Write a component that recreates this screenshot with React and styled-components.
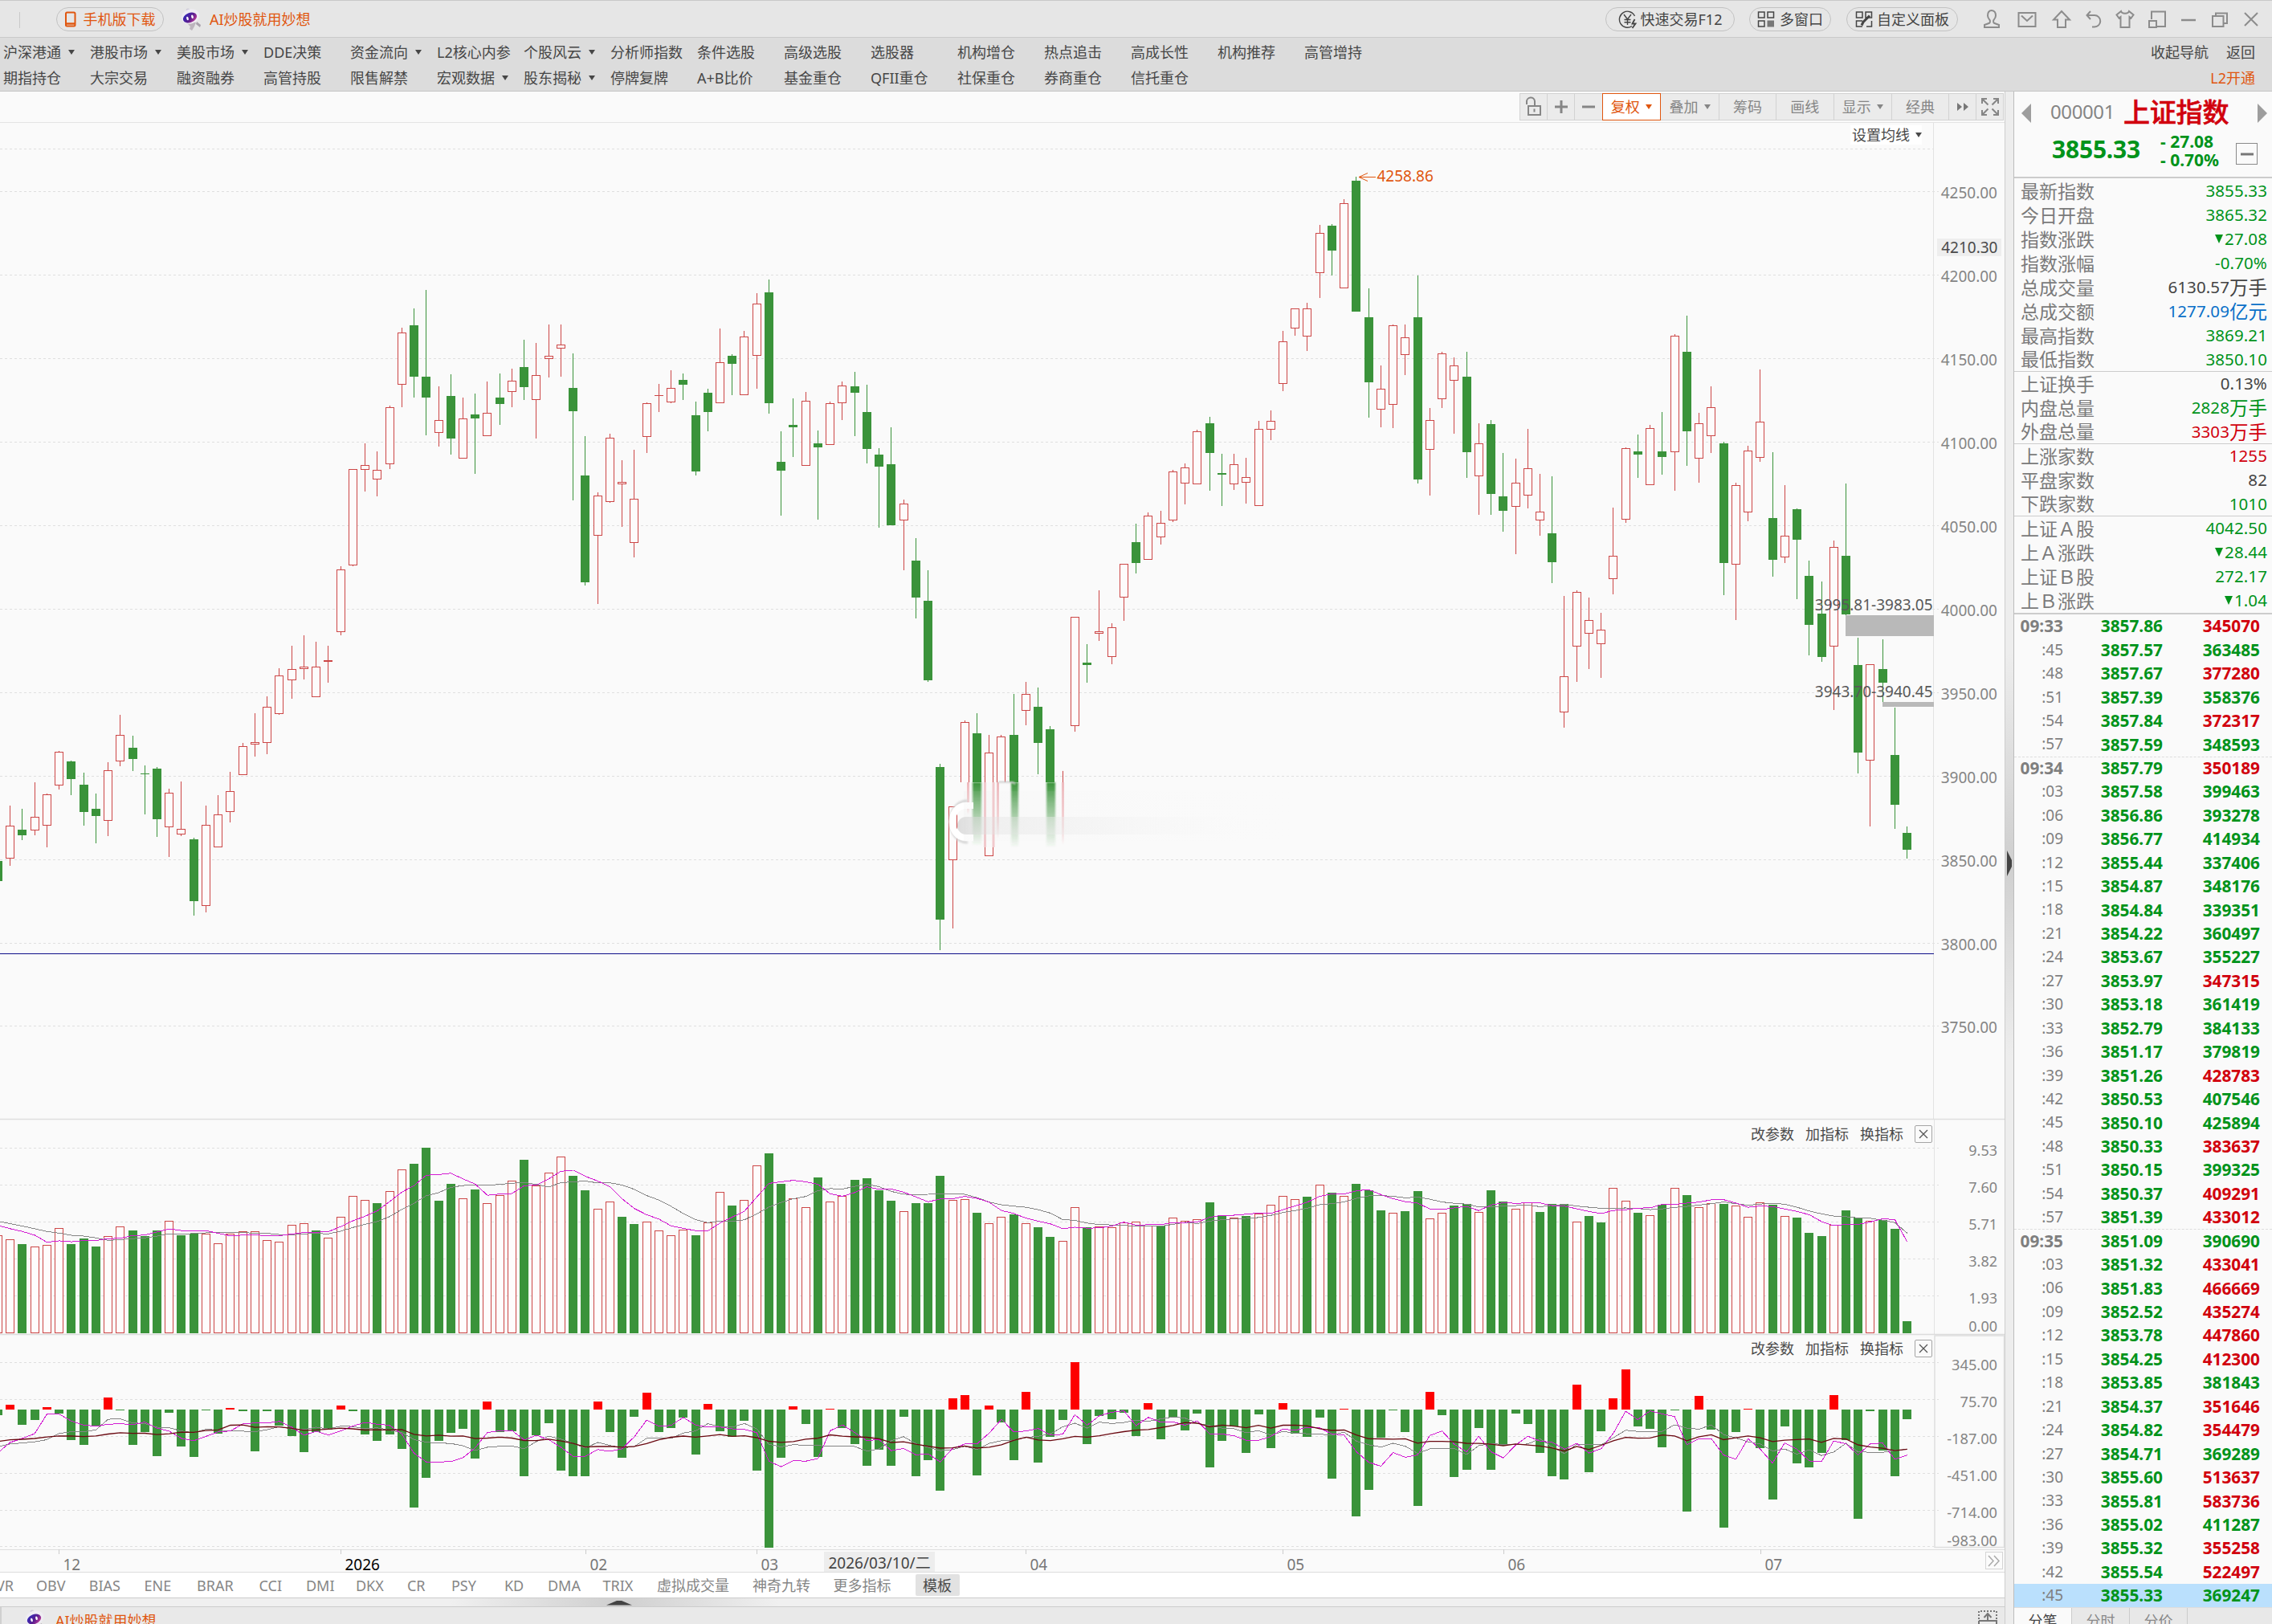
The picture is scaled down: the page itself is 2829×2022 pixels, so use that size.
import React from "react";
import styled, { createGlobalStyle, css } from "styled-components";

const GREEN = "#00931a";
const RED = "#d1000d";
const ORANGE = "#e0560f";
const FONT = `"Noto Sans", "Noto Sans CJK SC", sans-serif`;

const GlobalStyle = createGlobalStyle`
  * { box-sizing: border-box; }
  body { margin: 0; background: #fafafa; font-family: ${FONT}; font-size: 18px; line-height: 1; color: #333; overflow: hidden; }
  svg { display: block; flex: none; overflow: visible; }
  svg text { font-family: ${FONT}; }
`;

/* ---------- market data ---------- */

// Each block holds rows of "kind high top bottom low", measured down from `top` in 1/scale units.
const candleBlocks = [
  {
    top: 340,
    scale: 1.9122,
    rows: `g 1400 1400 1447 1447,r 1268 1316 1393 1412,g 1275 1325 1339 1350,r 1213 1295 1326 1338,r 1239 1241 1313 1368,
r 1138 1140 1219 1230,g 1161 1163 1205 1243,g 1189 1218 1283 1315,g 1240 1275 1293 1357,r 1165 1184 1303 1340,
r 1052 1100 1160 1175,g 1102 1130 1157 1186,g 1173 1191 1192 1288,g 1176 1180 1301 1343,r 1228 1237 1318 1391,
r 1210 1323 1334 1340,g 1344 1348 1495 1529,r 1268 1314 1504 1522,r 1243 1289 1366 1368,r 1187 1233 1282 1307,
r 1118 1127 1194 1194,r 1048 1117 1121 1152,r 1008 1033 1116 1146,r 941 958 1047 1051,r 887 943 967 1014,
r 862 937 941 968,r 878 937 1007 1007,r 887 922 923 975,r 698 706 852 863,r 467 467 695 697,
r 405 457 466 521,r 425 468 490 531,r 315 319 454 466,r 130 142 263 320,g 84 124 247 296,
g 41 247 296 386,r 270 350 378 413,g 241 293 394 433,r 296 346 439 439,g 287 337 346 479,r 258 333 387 387`,
  },
  {
    top: 320,
    scale: 1.7818,
    rows: `g 258 312 326 372,r 248 274 298 334,g 184 244 289 317,r 191 262 316 403,r 150 219 224 268,
r 150 195 202 266,g 214 290 342 539,g 397 485 722 728,r 522 529 617 770,r 392 401 541 546,
r 451 499 503 598,r 428 536 632 667,r 323 324 397 434,r 282 306 307 344,r 251 290 320 325,
g 258 273 283 318,g 321 351 476 485,g 292 301 344 387,r 159 233 322 324,g 216 219 237 307,
r 164 176 304 304,r 80 103 218 292,g 50 78 324 348,g 387 454 474 573,g 314 372 377 444,
r 299 319 462 462,g 385 413 422 583,r 321 324 416 416,r 276 285 322 361,g 255 287 301 397,
g 284 344 426 458,g 424 438 465 601,g 378 460 595 595,r 538 547 583 695,g 624 674 755 802,
g 695 763 939 943,g 1125 1131 1470 1538,r 1219 1219 1337 1490`,
  },
  {
    top: 200,
    scale: 1.7818,
    rows: `r 1242 1245 1500 1500,g 1226 1270 1379 1379,r 1274 1313 1542 1542,r 1274 1278 1500 1500,g 1183 1274 1379 1379,
r 1157 1183 1218 1252,g 1169 1212 1292 1362,g 1254 1262 1379 1379,r 1354 1379 1379 1379,r 1012 1012 1252 1267,
g 1072 1114 1119 1158,r 953 1044 1048 1066,r 1026 1035 1100 1118,r 895 895 968 1021,g 805 846 893 916,
r 780 788 883 886,r 777 804 833 851,r 686 690 797 801,r 672 680 714 763,r 597 601 717 717,
g 568 583 649 732,g 651 693 697 766,r 651 674 717 731,r 659 702 712 761,r 577 595 765 765,
r 554 577 596 620,r 378 401 493 511,r 327 327 370 388,r 315 327 388 422,r 143 160 248 305,
g 141 144 200 254,r 86 94 282 282,g 36 45 335 335,g 283 347 492 570,r 454 506 550 591,
r 363 365 539 593,r 363 392 429 475,g 255 347 707 717,r 548 576 639 743,r 424 428 527 548,r 437 454 486 605`,
  },
  {
    top: 340,
    scale: 2.1189,
    rows: `g 208 273 473 541,r 396 450 533 637,g 388 398 582 637,g 475 589 628 682,r 489 553 615 741,
r 412 515 584 621,r 530 629 650 692,g 536 687 763 818,r 852 1064 1156 1200,r 837 841 984 1078,
r 856 915 950 1045,r 896 941 976 1067,r 619 746 806 847,r 459 461 649 658,g 426 470 479 541,
r 401 409 558 558,g 367 470 485 531,r 161 166 471 575,g 112 208 417 508,r 369 396 488 553,
r 299 354 429 475,g 446 449 765 850,r 553 560 768 916,r 456 468 630 655,r 254 391 486 499,
g 473 646 756 801,r 559 693 747 765,g 621 623 703 860,g 759 799 928 1008,g 814 898 1013 1025,
r 706 723 984 1153,g 555 746 901 903,g 961 1034 1265 1321,r 1031 1031 1285 1459,g 966 1045 1081 1133,
g 1146 1271 1403 1467,g 1460 1477 1521 1545`,
  },
];

const candles = candleBlocks.flatMap(({ top, scale, rows }) =>
  rows.split(",").map((row) => {
    const [kind, ...v] = row.trim().split(" ");
    const [high, open, close, low] = v.map((n) => top + Number(n) / scale);
    return { kind, high, open, close, low };
  })
);

const volumeBlocks = [
  {
    top: 1400,
    scale: 2.9037,
    rows: `r400 r416 g433 r442 r437 r376 g433 g412 g441 r403 r370 g383 g403 g383 r349 g400 g394 r394 r431 r394 r387 r387 r419 r425
r364 r358 g383 r408 r335 r259 r274 g285 r242 r164 g142 g84 g276 g215 r268 g235 r286 r255 r204 g128 r222 r175 r117 g186 g238
r306 r280 g334 g360 r352 r384 r402 r381 g401 r355 r245 g293 r274 r149 g105 g215 r268 r300 g192 r280 r259 g200 g195 g238 g276
r315 g285 g285 g186 r274 r271 g319 r358 r335 g325 r358 g372 g407 r422 r300 g373 r370 r371 r353 r352 r367 g367 r338 r349 r344
g282 g328 r338 g331 r322 r291 r259 r271 g261 r219 g247 r259 g215`,
  },
  {
    top: 1390,
    scale: 2.7509,
    rows: `g252 g322 r331 g325 g256 r350 r331 g305 g300 r328 g253 g292 r315 r295 g327 g300 g301 r359 g341 g363 r246 r290 g330 r337
g303 r246 g270 r312 r297 g300 r304 r343 r293 g303 r342 g347 g399 g410 r372 g322 g347 r357 g356 g385 g701`,
  },
];

const flowBlocks = [
  {
    top: 1400,
    scale: 2.9037,
    rows: `g1050 r1013 g1086 g1069 r1022 g1045 g1140 g1159 g1089 r987 g1034 g1159 g1112 g1199 g1042 g1163 g1202 g1033 g1118 r1025
g1037 g1182 g1036 g1088 g1127 g1185 g1112 g1102 r1016 g1036 g1121 g1144 g1121 g1173 g1385 g1278 g1144 g1115 g1101 g1208 r1002
g1112 g1109 g1272 g1124 g1080 g1251 g1272 g1272 r1002 g1112 g1205 g1057 r970 g1112 g1098 g1060 g1193 r1010 g1109 g1130 g1071
g1251 g1530 g1205 r1019 g1083 g1202 r1029 g1098 g1156 g1234 g1176 g1234 g1057 g1272 g1214 g1324 r990 r979 g1269 r1016 g1077
g1214 r967 g1222 g1130 g1069 r859 g1156 g1054 g1066 g1042 g1127 r1008 g1138 g1060 g1106 g1045 g1240 g1144 g1092 g1188 g1048
g1170 r1008 g1118 g1130 g1060 g1280 r1029 g1417`,
  },
  {
    top: 1390,
    scale: 2.7509,
    rows: `g1279 g1100 g1007 g1080 g1334 r944 g1022 g1235 g1210 g1067 g1210 g1127 g1018 g1053 g1152 g1232 g1243 r919 g1219 g1078
r966 r867 g1062 g1070 g1133 g1007 g1353 r957 g1073 g1408 g1081 r1001 g1136 g1312 g1061 g1188 g1202 g1152 r955 g1109 g1378
g1009 g1145 g1232 g1037`,
  },
];

const readBars = (blocks) =>
  blocks.flatMap(({ top, scale, rows }) =>
    rows.trim().split(/\s+/).map((t) => ({ kind: t[0], y: top + Number(t.slice(1)) / scale }))
  );

const volumes = readBars(volumeBlocks);
const flows = readBars(flowBlocks);

// Values just before the visible range, needed to start the averages.
const fromFirst = (list) => list.map((n) => 1400 + n / 2.9037);
const volumeLead = fromFirst([330, 345, 345, 338, 317, 356, 383, 377, 309]);
const flowLead = fromFirst([
  1127, 1127, 1127, 1127, 1127, 1127, 1127, 1127, 1127, 1127, 1113, 1120, 1110, 1100, 1272, 1198, 1161, 1154, 1372,
]);

const STEP = 15.239;
const xAt = (i) => i * STEP - 2.6;

const averageLine = (bars, lead, n) => {
  const all = [...lead, ...bars.map((b) => b.y)];
  return bars
    .map((_, i) => {
      const end = i + lead.length + 1;
      const part = all.slice(Math.max(0, end - n), end);
      const mean = part.reduce((a, b) => a + b, 0) / part.length;
      return `${xAt(i).toFixed(1)},${mean.toFixed(1)}`;
    })
    .join(" ");
};

const priceTicks = Array.from({ length: 11 }, (_, i) => ({ label: (4250 - i * 50).toFixed(2), y: 238.4 + i * 103.9 }));
const volumeTicks = [["9.53", 1429.5], ["7.60", 1475.5], ["5.71", 1521.5], ["3.82", 1567.5], ["1.93", 1613.5]];
const flowTicks = [["345.00", 1696.5], ["75.70", 1742.5], ["-187.00", 1788.5], ["-451.00", 1834.5], ["-714.00", 1880.5]];
const months = [
  [73.5, "12"], [424.5, "2026"], [729.5, "02"], [942.5, "03"], [1277.5, "04"], [1597.5, "05"], [1872.5, "06"], [2192.5, "07"],
];

const navColumns = [
  ["沪深港通▾", "期指持仓"], ["港股市场▾", "大宗交易"], ["美股市场▾", "融资融券"], ["DDE决策", "高管持股"],
  ["资金流向▾", "限售解禁"], ["L2核心内参", "宏观数据▾"], ["个股风云▾", "股东揭秘▾"], ["分析师指数", "停牌复牌"],
  ["条件选股", "A+B比价"], ["高级选股", "基金重仓"], ["选股器", "QFII重仓"], ["机构增仓", "社保重仓"],
  ["热点追击", "券商重仓"], ["高成长性", "信托重仓"], ["机构推荐", ""], ["高管增持", ""],
];

const quoteGroups = [
  [
    ["最新指数", "3855.33", GREEN], ["今日开盘", "3865.32", GREEN], ["指数涨跌", "▼27.08", GREEN], ["指数涨幅", "-0.70%", GREEN],
    ["总成交量", "6130.57万手", "#444"], ["总成交额", "1277.09亿元", "#0a70c8"], ["最高指数", "3869.21", GREEN], ["最低指数", "3850.10", GREEN],
  ],
  [["上证换手", "0.13%", "#444"], ["内盘总量", "2828万手", GREEN], ["外盘总量", "3303万手", RED]],
  [["上涨家数", "1255", RED], ["平盘家数", "82", "#444"], ["下跌家数", "1010", GREEN]],
  [["上证Ａ股", "4042.50", GREEN], ["上Ａ涨跌", "▼28.44", GREEN], ["上证Ｂ股", "272.17", GREEN], ["上Ｂ涨跌", "▼1.04", GREEN]],
];

const ticks = `09:33 57.86 345070 r|:45 57.57 363485 g|:48 57.67 377280 r|:51 57.39 358376 g|:54 57.84 372317 r|:57 57.59 348593 g
09:34 57.79 350189 r|:03 57.58 399463 g|:06 56.86 393278 g|:09 56.77 414934 g|:12 55.44 337406 g|:15 54.87 348176 g|:18 54.84 339351 g|:21 54.22 360497 g|:24 53.67 355227 g|:27 53.97 347315 r|:30 53.18 361419 g|:33 52.79 384133 g|:36 51.17 379819 g|:39 51.26 428783 r|:42 50.53 407546 g|:45 50.10 425894 g|:48 50.33 383637 r|:51 50.15 399325 g|:54 50.37 409291 r|:57 51.39 433012 r
09:35 51.09 390690 g|:03 51.32 433041 r|:06 51.83 466669 r|:09 52.52 435274 r|:12 53.78 447860 r|:15 54.25 412300 r|:18 53.85 381843 g|:21 54.37 351646 r|:24 54.82 354479 r|:27 54.71 369289 g|:30 55.60 513637 r|:33 55.81 583736 r|:36 55.02 411287 g|:39 55.32 355258 r|:42 55.54 522497 r|:45 55.33 369247 g`
  .split(/[|\n]/)
  .map((t) => t.split(" "));

const indicatorTabs = [
  ["VR", 50], ["OBV", 65.7], ["BIAS", 68.8], ["ENE", 65.5], ["BRAR", 77.6], ["CCI", 58.4], ["DMI", 62], ["DKX", 64], ["CR", 55],
  ["PSY", 66], ["KD", 54], ["DMA", 68.5], ["TRIX", 67.5], ["虚拟成交量", 119], ["神奇九转", 100.6], ["更多指标", 102],
];

/* ---------- layout ---------- */

const Page = styled.div`width: 2829px; height: 2022px; display: flex; flex-direction: column; background: #fafafa; overflow: hidden;`;

const TitleBar = styled.header`
  height: 47px; flex: none; display: flex; align-items: center; background: #e6e6e6;
  border-top: 1px solid #c9c9c9; border-bottom: 1px solid #cacaca;
`;
const TitleRule = styled.i`width: 1px; height: 20px; margin: 2px 45px 0 24px; background: #c8c8c8;`;
const Pill = styled.div`
  width: ${(p) => p.$w}px; height: 30px; display: flex; align-items: center; justify-content: center; gap: ${(p) => p.$gap || 6}px;
  border: 1.5px solid #c2c2c2; border-radius: 15px; color: ${(p) => p.$color || "#444"}; margin-right: ${(p) => p.$after}px; white-space: nowrap;
`;
const Assistant = styled.div`display: flex; align-items: center; gap: 9px; color: ${ORANGE}; white-space: nowrap;`;
const TitleRight = styled.div`margin-left: auto; display: flex; align-items: center; padding-right: 7px;`;
const IconCell = styled.div`width: ${(p) => p.$w}px; display: flex; justify-content: center; color: #8c8c8c;`;

const NavBar = styled.nav`
  height: 67px; flex: none; display: flex; justify-content: space-between; background: #dcdcdc; padding: 1px 0 0 4px; border-bottom: 1px solid #c6c6c6;
`;
const NavGrid = styled.div`display: grid; grid-template-columns: repeat(16, 108px); grid-auto-flow: column; grid-template-rows: 33px 32px;`;
const NavItem = styled.a`display: flex; align-items: center; color: #464646; white-space: nowrap;`;
const Caret = styled.i`
  width: 0; height: 0; margin-left: ${(p) => p.$gap ?? 9}px; border: 4px solid transparent; border-top: 6px solid currentColor; border-bottom: 0;
`;
const NavAside = styled.div`display: grid; grid-template-rows: 33px 32px; padding-right: 21px; justify-items: end;`;
const NavPair = styled.div`display: flex; gap: 22px; align-items: center; color: ${(p) => p.$color || "#464646"};`;

const Body = styled.main`flex: 1; display: flex; min-height: 0;`;
const ChartColumn = styled.section`width: 2496px; display: flex; flex-direction: column; position: relative;`;

const Toolbar = styled.div`height: 39px; flex: none; display: flex; justify-content: flex-end; align-items: center; padding-right: 1px; border-bottom: 1px solid #e4e4e4;`;
const ToolButton = styled.button`
  width: ${(p) => p.$w + 1}px; height: 34px; margin: 0 0 0 -1px; padding: 0; display: flex; align-items: center; justify-content: center;
  font: 18px ${FONT}; line-height: 1; background: #ebebeb; color: #868686; border: 1px solid #d2d2d2;
  ${(p) => p.$active && css`background: #fff; color: ${ORANGE}; border-color: ${ORANGE}; position: relative;`}
`;

const Panel = styled.div`height: ${(p) => p.$h}px; flex: none; position: relative;`;
const PanelActions = styled.div`
  position: absolute; top: ${(p) => p.$top}px; right: 90px; height: 22px; display: flex; align-items: center; gap: 14px; color: #4a4a4a;
`;
const CloseBox = styled.button`
  width: 22px; height: 22px; padding: 0; display: flex; align-items: center; justify-content: center; background: none; border: 1px solid #a5a5a5; border-radius: 2px; color: #555;
`;
const AverageSetting = styled.div`
  position: absolute; top: 3px; right: 103px; height: 24px; display: flex; align-items: center; color: #4a4a4a; background: #fff; padding-left: 2px;
`;

const IndicatorBar = styled.div`height: 32px; flex: none; display: flex; align-items: center; background: #fff; border-top: 1px solid #ddd; overflow: hidden; color: #868686;`;
const IndicatorTab = styled.span`width: ${(p) => p.$w}px; flex: none; white-space: nowrap; line-height: 26px; &:first-child { margin-left: -5px; }`;
const TemplateTab = styled.span`width: 55px; height: 27px; display: flex; align-items: center; justify-content: center; background: #e2e2e2; color: #4a4a4a; border-radius: 2px;`;
const Drawer = styled.div`
  height: 12px; flex: none; background: linear-gradient(90deg, #f0f0f0 560px, #cfcfcf 770px, #f0f0f0 970px); border-top: 1px solid #ccc; border-bottom: 1px solid #ccc; padding-left: 755px;
`;
const StatusBar = styled.footer`height: 21px; flex: none; display: flex; align-items: flex-start; justify-content: space-between; background: #e9e9e9; border-left: 2px solid #d0d0d0; padding: 3px 8px 0 28px; overflow: hidden;`;
const StatusAssistant = styled(Assistant)`gap: 11px; height: 27px;`;

const Splitter = styled.div`
  width: 11px; display: flex; flex-direction: column; justify-content: center; border-left: 1px solid #cdcdcd; padding-top: 14px;
  background: linear-gradient(180deg, #ededed 700px, #cfcfcf 960px, #ededed 1200px);
`;

const QuotePanel = styled.aside`width: 322px; border-left: 1px solid #bdbdbd; display: flex; flex-direction: column; overflow: hidden;`;
const QuoteHead = styled.div`height: 108px; flex: none; border-bottom: 2px solid #ccc;`;
const NameRow = styled.div`display: flex; align-items: center; height: 53px; padding: 0 6px 0 9px;`;
const Code = styled.span`width: 80px; margin: -3px 11px 0 24px; font-size: 24px; letter-spacing: -0.4px; color: #858585;`;
const Name = styled.span`margin-top: -3px; font-size: 33px; font-weight: 500; color: ${RED}; letter-spacing: -0.2px; -webkit-text-stroke: 0.6px ${RED};`;
const NextArrow = styled.svg`margin-left: auto;`;
const PriceRow = styled.div`display: flex; padding-left: 47px; font-weight: 700; color: ${GREEN};`;
const LastPrice = styled.span`width: 135px; font-size: 30px; line-height: 38px; letter-spacing: -0.2px;`;
const Change = styled.div`width: 94px; font-size: 21px; line-height: 23px; margin-top: -2px; white-space: pre;`;
const FoldBox = styled.button`width: 27px; height: 27px; margin: 11px 0 0; padding: 0; display: grid; place-items: center; background: none; border: 1.5px solid #8a8a8a; color: #777;`;

const QuoteGroup = styled.dl`margin: 0; flex: none; border-bottom: ${(p) => (p.$last ? 2 : 1)}px solid #ccc; padding-top: ${(p) => (p.$first ? 1 : 0)}px;`;
const QuoteRow = styled.div`
  height: 30px; display: flex; align-items: center; justify-content: space-between; padding: 0 6px 0 8px;
  &:last-child { height: ${(p) => (p.$last ? 30 : 29)}px; }
`;
const Label = styled.dt`font-size: 23px; color: #7b7b7b;`;
const Value = styled.dd`margin: -2px 0 0; font-size: 20.5px; line-height: 28px; color: ${(p) => p.$color}; letter-spacing: 0.1px; display: flex; align-items: center;`;
const Unit = styled.span`font-size: 23.5px; letter-spacing: 0; padding-top: 2px;`;
const DownMark = styled.i`width: 0; height: 0; border: 5.5px solid transparent; border-top: 11px solid currentColor; border-bottom: 0; margin-right: 2px;`;

const TickRow = styled.div`
  height: 29.44px; flex: none; display: grid; grid-template-columns: 61px 124px 121px; align-items: center; text-align: right; font-size: 20.8px; font-weight: 700; color: ${GREEN};
  background: ${(p) => (p.$current ? "#bae0fd" : "none")}; border-top: ${(p) => (p.$minute ? "1px dashed #ddd" : "0")};
`;
const TickTime = styled.span`color: #7f7f7f; font-weight: ${(p) => (p.$bold ? 700 : 400)}; font-size: ${(p) => (p.$bold ? 20.8 : 19)}px;`;
const TickVolume = styled.span`color: ${(p) => (p.$kind === "r" ? RED : GREEN)};`;
const QuoteTabs = styled.div`flex: 1; min-height: 20px; display: flex; background: #e8e8e8; border-top: 1px solid #ddd;`;
const QuoteTab = styled.span`
  width: 72px; height: 32px; flex: none; display: flex; align-items: center; justify-content: center; border-right: 1px solid #ccc; color: ${(p) => (p.$active ? "#444" : "#888")}; background: ${(p) => (p.$active ? "#fafafa" : "none")};
`;

/* ---------- icons ---------- */

const Icon = ({ w = 24, h = 26, sw = 2, children }) => (
  <svg width={w} height={h} viewBox={`0 0 ${w} ${h}`} fill="none" stroke="currentColor" strokeWidth={sw}>{children}</svg>
);

const Robot = () => (
  <svg width="28" height="28" viewBox="0 0 28 28">
    <defs>
      <linearGradient id="visor" x1="0" y1="0" x2="1" y2="1">
        <stop offset="0" stopColor="#2b2fc4" /><stop offset="0.55" stopColor="#5a1d8f" /><stop offset="1" stopColor="#e0489a" />
      </linearGradient>
    </defs>
    <path d="M10 20 L13 17 L20 18 L18 23 L15 28 L12 26 L13 23 Z" fill="#bdb5bd" />
    <path d="M21 17 L26 21 L25 24 L20 20 Z" fill="#a9a2ac" />
    <circle cx="10" cy="3" r="2.4" fill="#d0ccda" />
    <ellipse cx="13" cy="10.5" rx="11.5" ry="9" fill="#efedf3" transform="rotate(-18 13 10.5)" />
    <ellipse cx="12.5" cy="12" rx="9" ry="6" fill="url(#visor)" transform="rotate(-22 12.5 12)" />
    <ellipse cx="9.5" cy="13" rx="1.3" ry="2.3" fill="#fff" transform="rotate(-15 9.5 13)" />
    <ellipse cx="15.5" cy="10.8" rx="1.3" ry="2.3" fill="#fff" transform="rotate(-15 15.5 10.8)" />
  </svg>
);

const PhoneIcon = () => (
  <Icon w={14} h={20}><rect x="1" y="1.5" width="11.5" height="17" rx="1.5" /><path d="M1 15.5H12.5" strokeWidth="2.4" /></Icon>
);
const TradeIcon = () => (
  <Icon w={24} h={24} sw={1.4}>
    <path d="M17 20.5A10 10 0 1 1 20.5 8" /><path d="M7 6l4.5 6L16 6M11.5 12v7M7.5 12.5h8M7.5 15.7h8" />
    <path d="M20.5 12l-3 5.5h4l-4 5.5" strokeWidth="1.8" />
  </Icon>
);
const WindowsIcon = () => (
  <Icon w={22} h={22} sw={1.5}><rect x="1.5" y="2" width="7.5" height="7" /><rect x="13" y="2" width="7.5" height="7" /><rect x="1.5" y="13" width="7.5" height="7" /><rect x="12.5" y="12.5" width="8.5" height="8" fill="#777" stroke="none" /></Icon>
);
const CustomIcon = () => (
  <Icon w={22} h={22} sw={1.5}><path d="M9 2H1.5v7H9zM20.5 9V2H13v7zM9 13H1.5v7H9M14 20h6.5v-7" /><path d="M8 18.500l2-4 8-8" strokeWidth="3" /></Icon>
);

const windowIcons = [
  [44, <Icon key="u"><path d="M12 2c-3.8 0-5 3.4-5 6.5 0 2.600 1.300 4 2.600 5.500.6 1 .3 3-.6 3.800L3 20v3h18v-3l-6-2.200c-.9-.8-1.200-2.800-.6-3.800C15.700 12.500 17 11.100 17 8.500 17 5.400 15.800 2 12 2z" /></Icon>],
  [44, <Icon key="m"><rect x="1.500" y="5" width="21" height="17" /><path d="M5 8.500l7 6.500 7-6.500" /></Icon>],
  [42, <Icon key="h"><path d="M12 3L2 13.500h5V23h10v-9.500h5z" /></Icon>],
  [38, <Icon key="b" w={22}><path d="M7 3L2.500 8 7 13M3 8h9a7 7 0 0 1 0 14.500H9" /></Icon>],
  [40, <Icon key="t"><path d="M7 3L1.500 7.500l3 4L6.500 10v13h11V10l2 1.500 3-4L17 3c-1 3.500-9 3.500-10 0z" /></Icon>],
  [39, <Icon key="p"><path d="M5 13V3.500h17V22H12" /><rect x="2" y="15" width="9" height="8" /></Icon>],
  [39, <Icon key="n" w={18}><path d="M0 14h18" strokeWidth="2.500" /></Icon>],
  [39, <Icon key="r" w={22}><path d="M6 8V5.500h14V18h-4" /><rect x="2" y="9" width="13.500" height="13" /></Icon>],
  [39, <Icon key="x" w={20}><path d="M2 5l16 16M18 5L2 21" /></Icon>],
];

const LockIcon = () => <Icon w={24} h={24}><rect x="5" y="11" width="15" height="11" /><path d="M12.500 14.500v4M3 9V6a5 5 0 0 1 10-1v6" /></Icon>;
const PlusIcon = () => <Icon w={18} h={18} sw={3}><path d="M1 9h16M9 1v16" /></Icon>;
const MinusIcon = () => <Icon w={18} h={18} sw={3}><path d="M1 9h16" /></Icon>;
const ForwardIcon = () => <svg width="16" height="12"><path d="M1 1l6 5-6 5zM9 1l6 5-6 5z" fill="#777" /></svg>;
const ExpandIcon = () => (
  <Icon w={24} h={24}><path d="M2 8V2h6M16 2h6v6M22 16v6h-6M8 22H2v-6M2.500 2.500l7 7M21.500 2.500l-7 7M21.500 21.500l-7-7M2.500 21.500l7-7" /></Icon>
);

/* ---------- charts ---------- */

const GRID = { stroke: "#dfdfdf", strokeWidth: 1, strokeDasharray: "3 3" };
const WIDE = { shapeRendering: "crispEdges" };
const UP = "#cc4646";
const DOWN = "#3a933a";

const AxisText = ({ x = 2487, y, size = 19, color = "#858585", children, anchor = "end" }) => (
  <text x={x} y={y} fontSize={size} fill={color} textAnchor={anchor}>{children}</text>
);

const Candle = ({ i, high, open, close, low, kind }) => {
  const x = Math.round(xAt(i) - 5.5);
  const mid = x + 5.5;
  const [top, bottom] = [Math.round(open), Math.round(close)];
  const color = kind === "r" ? UP : DOWN;
  const flat = bottom - top < 1;
  if (kind === "r" && i === 87) return <path d={`M${mid} ${high}V974`} stroke={color} />;
  return (
    <g {...WIDE}>
      {high < top && <path d={`M${mid} ${Math.round(high)}V${top}`} stroke={color} />}
      {low > bottom && <path d={`M${mid} ${bottom}V${Math.round(low)}`} stroke={color} />}
      {kind === "r" && !flat ? (
        <rect x={x + 0.5} y={top + 0.5} width="10" height={Math.max(1, bottom - top - 0.5)} fill="#fdfbfb" stroke={color} />
      ) : (
        <rect x={x} y={top} width="11" height={Math.max(1, bottom - top)} fill={color} />
      )}
    </g>
  );
};

const Haze = () => (
  <g>
    <defs>
      <linearGradient id="fadeGreen" x1="0" y1="0" x2="0" y2="1"><stop offset="0" stopColor="#3a933a" /><stop offset="0.35" stopColor="#3a933a" stopOpacity="0.6" /><stop offset="1" stopColor="#3a933a" stopOpacity="0.02" /></linearGradient>
      <linearGradient id="fadePink" x1="0" y1="0" x2="0" y2="1"><stop offset="0" stopColor="#eeb9bd" /><stop offset="0.7" stopColor="#f4d3d5" /><stop offset="1" stopColor="#fafafa" /></linearGradient>
      <linearGradient id="streak" x1="0" y1="0" x2="1" y2="0"><stop offset="0" stopColor="#d0d0d0" stopOpacity="0.7" /><stop offset="0.1" stopColor="#e2e2e2" stopOpacity="0.4" /><stop offset="0.4" stopColor="#f0f0f0" stopOpacity="0.5" /><stop offset="1" stopColor="#fafafa" stopOpacity="0" /></linearGradient>
      <filter id="soft" x="-20%" y="-20%" width="140%" height="140%"><feGaussianBlur stdDeviation="1.3" /></filter>
    </defs>
    <path d="M1194 974H1221V1060H1194z M1239 974H1340V1060H1239z" fill="#fafafa" />
    <path d="M1225 974H1237V1055H1225z" fill="#fafafa" />
    <rect x="1204" y="974" width="3" height="40" fill="url(#fadePink)" />
    <g filter="url(#soft)">
      <rect x="1211" y="974" width="11" height="78" fill="url(#fadeGreen)" />
      <rect x="1259" y="974" width="9" height="80" fill="url(#fadeGreen)" />
      <rect x="1303" y="974" width="11" height="80" fill="url(#fadeGreen)" />
    </g>
    <rect x="1225" y="974" width="3" height="81" fill="#f1c9cc" />
    <rect x="1235.500" y="974" width="3" height="81" fill="#f1c9cc" />
    <rect x="1241" y="974" width="3" height="70" fill="url(#fadePink)" />
    <rect x="1322" y="974" width="3" height="78" fill="url(#fadePink)" />
    <path d="M1243 973.500h14q5 0 7 3" stroke="#c9c9c9" strokeWidth="2" fill="none" filter="url(#soft)" />
    <path d="M1205 997C1176 997 1176 1049 1205 1049" stroke="#d4d4d4" strokeWidth="3" fill="none" filter="url(#soft)" />
    <path d="M1212 1003H1203C1180 1003 1180 1043 1203 1043H1212" stroke="#fff" strokeWidth="8" fill="none" />
    <rect x="1192" y="1017" width="410" height="22" rx="11" fill="url(#streak)" />
    <rect x="1200" y="985" width="450" height="62" fill="url(#streak)" opacity="0.12" />
  </g>
);

const PriceChart = () => (
  <svg width="2496" height="1241" viewBox="0 153 2496 1241">
    <path d="M0 185.500H2408" {...GRID} />
    {priceTicks.map((t) => <path key={t.label} d={`M0 ${Math.round(t.y) + 0.5}H2414`} {...GRID} />)}
    <path d="M2407.500 153V1394" stroke="#e2e2e2" />
    <path d="M0 1393.500H2496" stroke="#dedede" strokeWidth="1.500" />
    {candles.map((c, i) => <Candle key={i} i={i} {...c} />)}
    <Haze />
    <path d="M0 1187.500H2408" stroke="#10108a" {...WIDE} />
    <rect x="2298" y="766" width="110" height="26" fill="#b9b9b9" />
    <rect x="2344" y="874" width="64" height="6" fill="#b9b9b9" />
    <AxisText x={2406.5} y={760} color="#585858">3995.81-3983.05</AxisText>
    <AxisText x={2406.5} y={868} color="#585858">3943.70-3940.45</AxisText>
    <path d="M1713 220.500H1692M1703 215.500L1692 220.500L1703 225.500" stroke={ORANGE} fill="none" />
    <AxisText x={1714.5} y={226} color={ORANGE} anchor="start">4258.86</AxisText>
    <rect x="2412" y="297" width="80" height="22" fill="#eee" />
    {priceTicks.map((t) => <AxisText key={t.label} y={t.y + 9}>{t.label}</AxisText>)}
    <AxisText x={2487.5} y={315} color="#4a4a4a">4210.30</AxisText>
  </svg>
);

const VolumeChart = () => (
  <svg width="2496" height="268" viewBox="0 1394 2496 268">
    {volumeTicks.map(([label, y]) => <path key={label} d={`M0 ${y}H2414`} {...GRID} />)}
    <g {...WIDE}>
      {volumes.map(({ kind, y }, i) => {
        const x = Math.round(xAt(i) - 5.5);
        const top = Math.round(y);
        return kind === "r" ? (
          <rect key={i} x={x + 0.5} y={top + 0.5} width="10" height={1659 - top} fill="#fefcfc" stroke={UP} />
        ) : (
          <rect key={i} x={x} y={top} width="11" height={1660 - top} fill={DOWN} />
        );
      })}
    </g>
    <g fill="none" {...WIDE}>
      <polyline points={averageLine(volumes, volumeLead, 10)} stroke="#858585" />
      <polyline points={averageLine(volumes, volumeLead, 5)} stroke="#d21bd2" />
    </g>
    <path d="M2408.500 1394V1662" stroke="#e2e2e2" />
    <path d="M0 1661.500H2496" stroke="#dcdcdc" strokeWidth="1.500" />
    {volumeTicks.map(([label, y]) => <AxisText key={label} y={y + 9.5} size={18}>{label}</AxisText>)}
    <AxisText y={1657.5} size={18}>0.00</AxisText>
  </svg>
);

const FlowChart = () => (
  <svg width="2496" height="267" viewBox="0 1662 2496 267">
    {flowTicks.map(([label, y]) => <path key={label} d={`M0 ${y}H2414`} {...GRID} />)}
    <path d="M0 1925.500H2408" {...GRID} />
    <g {...WIDE}>
      {flows.map(({ kind, y }, i) => {
        const x = Math.round(xAt(i) - 5.5);
        const end = Math.round(y);
        const top = Math.min(1755, end);
        return <rect key={i} x={x} y={top} width="11" height={Math.max(1, Math.abs(end - 1755))} fill={kind === "r" ? "#fd0000" : DOWN} />;
      })}
    </g>
    <g fill="none">
      <polyline points={averageLine(flows, flowLead, 10)} stroke="#858585" {...WIDE} />
      <polyline points={averageLine(flows, flowLead, 5)} stroke="#d21bd2" {...WIDE} />
      <polyline points={averageLine(flows, flowLead, 20)} stroke="#6a0810" strokeWidth="1.300" />
    </g>
    <rect x="2409" y="1663" width="86.500" height="263.500" fill="none" stroke="#dedede" strokeWidth="1.500" />
    {flowTicks.map(([label, y]) => <AxisText key={label} y={y + 9.5} size={18.2}>{label}</AxisText>)}
    <AxisText y={1925} size={18.2}>-983.00</AxisText>
  </svg>
);

const DateAxis = () => (
  <svg width="2496" height="28" viewBox="0 1929 2496 28">
    <path d="M0 1929.500H2496" stroke="#dedede" />
    {months.map(([x, label]) => (
      <g key={label}>
        <path d={`M${x} 1929V1935`} stroke="#ccc" />
        <AxisText x={x + 5} y={1955} color={label === "2026" ? "#000" : "#777"} anchor="start">{label}</AxisText>
      </g>
    ))}
    <rect x="1026" y="1932" width="138" height="25" fill="#ededed" />
    <AxisText x={1031.5} y={1953} color="#444" anchor="start">2026/03/10/二</AxisText>
    <rect x="2472.500" y="1932.500" width="21" height="21" fill="#fbfbfb" stroke="#d5d5d5" />
    <path d="M2476 1937l6 6.500-6 6.500M2483 1937l6 6.500-6 6.500" stroke="#aaa" strokeWidth="1.500" fill="none" />
  </svg>
);

const Actions = ({ top }) => (
  <PanelActions $top={top}>
    <span>改参数</span><span>加指标</span><span>换指标</span>
    <CloseBox><Icon w={12} h={14} sw={1.3}><path d="M1 2l10 10M11 2L1 12" /></Icon></CloseBox>
  </PanelActions>
);

const withUnit = (text) => {
  const [, mark, number, unit] = text.match(/^(▼?)([^万亿]*)(.*)$/);
  return (
    <>
      {mark && <DownMark />}
      {number}
      {unit && <Unit>{unit}</Unit>}
    </>
  );
};

const NavLabel = ({ text }) => (
  <NavItem>
    {text.replace("▾", "")}
    {text.endsWith("▾") && <Caret />}
  </NavItem>
);

export default function App() {
  return (
    <Page>
      <GlobalStyle />
      <TitleBar>
        <TitleRule />
        <Pill $w={134} $gap={9} $color={ORANGE} $after={20}><PhoneIcon />手机版下载</Pill>
        <Assistant><Robot />AI炒股就用妙想</Assistant>
        <TitleRight>
          <Pill $w={161} $gap={4} $after={18}><TradeIcon />快速交易F12</Pill>
          <Pill $w={102} $gap={6} $after={19}><WindowsIcon />多窗口</Pill>
          <Pill $w={139} $gap={5} $after={20}><CustomIcon />自定义面板</Pill>
          {windowIcons.map(([w, icon], i) => <IconCell key={i} $w={w}>{icon}</IconCell>)}
        </TitleRight>
      </TitleBar>

      <NavBar>
        <NavGrid>
          {navColumns.flatMap(([a, b], i) => [<NavLabel key={`a${i}`} text={a} />, <NavLabel key={`b${i}`} text={b} />])}
        </NavGrid>
        <NavAside>
          <NavPair><span>收起导航</span><span>返回</span></NavPair>
          <NavPair $color={ORANGE}>L2开通</NavPair>
        </NavAside>
      </NavBar>

      <Body>
        <ChartColumn>
          <Toolbar>
            <ToolButton $w={34}><LockIcon /></ToolButton>
            <ToolButton $w={34}><PlusIcon /></ToolButton>
            <ToolButton $w={34.5}><MinusIcon /></ToolButton>
            <ToolButton $w={72.5} $active>复权<Caret $gap={7} /></ToolButton>
            <ToolButton $w={73}>叠加<Caret $gap={7} /></ToolButton>
            <ToolButton $w={71}>筹码</ToolButton>
            <ToolButton $w={71.5}>画线</ToolButton>
            <ToolButton $w={72.5}>显示<Caret $gap={7} /></ToolButton>
            <ToolButton $w={71}>经典</ToolButton>
            <ToolButton $w={34}><ForwardIcon /></ToolButton>
            <ToolButton $w={34}><ExpandIcon /></ToolButton>
          </Toolbar>
          <Panel $h={1241}>
            <PriceChart />
            <AverageSetting>设置均线<Caret $gap={7} /></AverageSetting>
          </Panel>
          <Panel $h={268}><VolumeChart /><Actions top={7} /></Panel>
          <Panel $h={267}><FlowChart /><Actions top={6} /></Panel>
          <DateAxis />
          <IndicatorBar>
            {indicatorTabs.map(([label, w]) => <IndicatorTab key={label} $w={w}>{label}</IndicatorTab>)}
            <TemplateTab>模板</TemplateTab>
          </IndicatorBar>
          <Drawer><svg width="32" height="10"><path d="M0 8.500L13 3h6L32 8.500z" fill="#444" /></svg></Drawer>
          <StatusBar>
            <StatusAssistant><Robot />AI炒股就用妙想</StatusAssistant>
            <Icon w={26} h={26}><path d="M2 24V2h22v22" strokeDasharray="2 2" color="#777" /><path d="M2 14h22v10M2 14v10M13 14V6M8.500 10L13 5l4.500 5" color="#777" /></Icon>
          </StatusBar>
        </ChartColumn>

        <Splitter><svg width="10" height="36"><path d="M2 2L8 14v8L2 34z" fill="#444" /></svg></Splitter>

        <QuotePanel>
          <QuoteHead>
            <NameRow>
              <svg width="12" height="24"><path d="M12 0V24L0 12z" fill="#9d9d9d" /></svg>
              <Code>000001</Code>
              <Name>上证指数</Name>
              <NextArrow width="12" height="24"><path d="M0 0V24L12 12z" fill="#9d9d9d" /></NextArrow>
            </NameRow>
            <PriceRow>
              <LastPrice>3855.33</LastPrice>
              <Change>{"- 27.08\n- 0.70%"}</Change>
              <FoldBox><MinusIcon /></FoldBox>
            </PriceRow>
          </QuoteHead>
          {quoteGroups.map((rows, g) => (
            <QuoteGroup key={g} $first={g === 0} $last={g === 3}>
              {rows.map(([label, value, color]) => (
                <QuoteRow key={label} $last={g === 3}>
                  <Label>{label}</Label>
                  <Value $color={color}>{withUnit(value)}</Value>
                </QuoteRow>
              ))}
            </QuoteGroup>
          ))}
          {ticks.map(([time, price, volume, kind], i) => (
            <TickRow key={i} $current={i === ticks.length - 1} $minute={i > 0 && time.length > 3}>
              <TickTime $bold={time.length > 3}>{time}</TickTime>
              <span>38{price}</span>
              <TickVolume $kind={kind}>{volume}</TickVolume>
            </TickRow>
          ))}
          <QuoteTabs>
            <QuoteTab $active>分笔</QuoteTab><QuoteTab>分时</QuoteTab><QuoteTab>分价</QuoteTab>
          </QuoteTabs>
        </QuotePanel>
      </Body>
    </Page>
  );
}
